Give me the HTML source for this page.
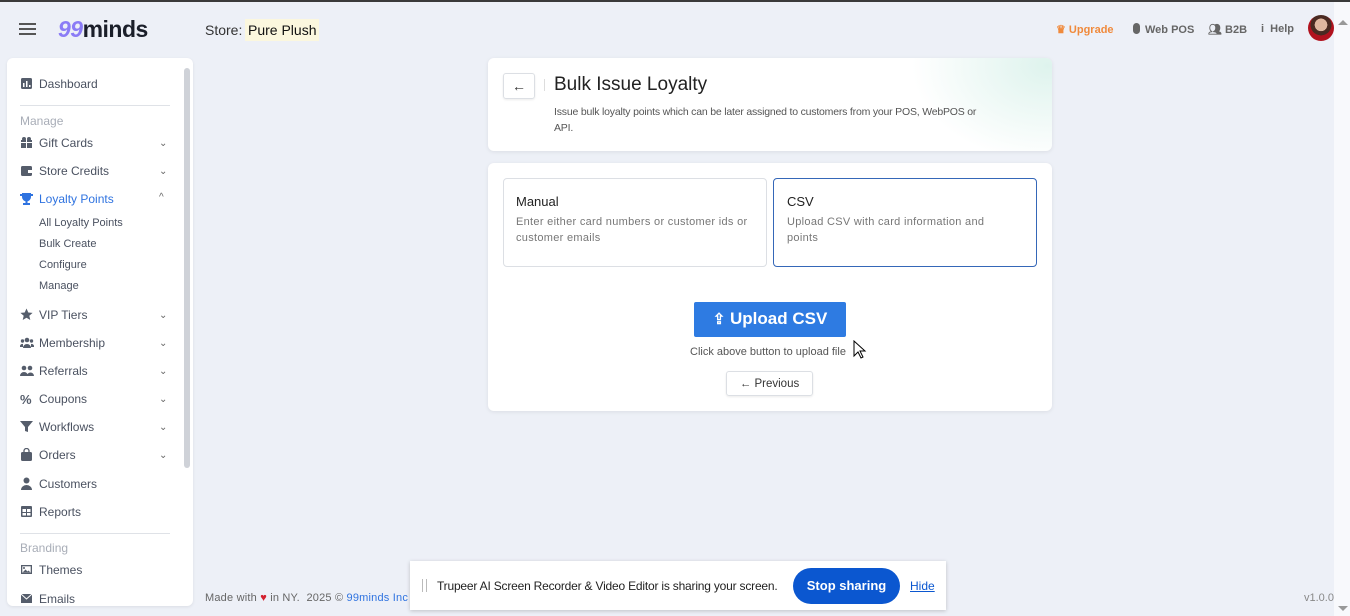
<!DOCTYPE html>
<html><head><meta charset="utf-8"><style>
*{box-sizing:border-box;margin:0;padding:0}
body{width:1350px;height:616px;overflow:hidden;background:#edf0f7;font-family:"Liberation Sans",sans-serif;color:#3d4451;position:relative}
.a{position:absolute}
.topline{left:0;top:0;width:1350px;height:2px;background:#3a3a3a}
.vscroll{left:1334px;top:2px;width:16px;height:614px;background:#f8f9fc}
.side{left:7px;top:58px;width:186px;height:548px;background:#fff;border-radius:6px;box-shadow:0 1px 3px rgba(0,0,0,.08);overflow:hidden}
.item{position:absolute;left:13px;font-size:12px;color:#4a5160}
.item svg{position:absolute;left:0;top:0}
.item span{position:absolute;left:19px;top:0;white-space:nowrap}
.chev{position:absolute;left:152px;font-size:10px;color:#666}
.sub{position:absolute;left:32px;font-size:11px;color:#4a5160}
.sec{position:absolute;left:13px;font-size:12px;color:#a8adb7}
.hr{position:absolute;left:13px;width:150px;height:1px;background:#dfe2e7}
.card{background:#fff;border-radius:6px;box-shadow:0 1px 4px rgba(0,0,0,.08)}
</style></head><body>
<div class="a topline"></div>
<div class="a vscroll"><div class="a" style="left:4px;top:18px;width:0;height:0;border-left:5px solid transparent;border-right:5px solid transparent;border-bottom:5px solid #999"></div><div class="a" style="left:4px;top:604px;width:0;height:0;border-left:5px solid transparent;border-right:5px solid transparent;border-top:5px solid #999"></div></div>

<!-- header -->
<div class="a" style="left:19px;top:23px;width:17px;height:1.5px;background:#555;box-shadow:0 5px 0 #555,0 10px 0 #555"></div>
<div class="a" style="left:58px;top:16px;font-size:23px;font-weight:bold;letter-spacing:-0.5px"><span style="color:#8b7cf6;font-style:italic">99</span><span style="color:#1b1f2a">minds</span></div>
<div class="a" style="left:205px;top:22px;font-size:14px;color:#333">Store:</div>
<div class="a" style="left:245px;top:19px;background:#fbf7de;padding:3px 3px;font-size:14px;color:#111">Pure Plush</div>

<div class="a" style="left:1056px;top:23px;font-size:11px;font-weight:bold;color:#f08a3c">♛ Upgrade</div>
<div class="a" style="left:1133px;top:23px;font-size:11px;font-weight:bold;color:#666"><span style="display:inline-block;width:7px;height:11px;background:#666;border-radius:4px;vertical-align:-1px;margin-right:5px"></span>Web POS</div>
<div class="a" style="left:1208px;top:23px;font-size:11px;font-weight:bold;color:#666">👥︎ B2B</div>
<div class="a" style="left:1261px;top:23px;font-size:11px;font-weight:bold;color:#666"><b>i</b>&nbsp; Help</div>
<div class="a" style="left:1308px;top:15px;width:26px;height:26px;border-radius:50%;background:radial-gradient(circle at 50% 38%,#e0b7a0 0 30%,#4a2a22 31% 50%,#b1121e 51%)"></div>

<!-- sidebar -->
<div class="a side">
 <div class="a" style="left:177px;top:10px;width:6px;height:400px;background:#cfd2d8;border-radius:3px"></div>
 <div class="item" style="top:19px"><svg width="13" height="13"><rect x="1" y="1" width="11" height="11" rx="1.5" fill="#555d6b"/><rect x="3" y="6" width="1.5" height="4" fill="#fff"/><rect x="6" y="4" width="1.5" height="6" fill="#fff"/><rect x="9" y="8" width="1.5" height="2" fill="#fff"/></svg><span>Dashboard</span></div>
 <div class="hr" style="top:47px"></div>
 <div class="sec" style="top:56px">Manage</div>
 <div class="item" style="top:78px"><svg width="13" height="13"><rect x="1" y="4" width="11" height="8" fill="#555d6b"/><rect x="6" y="4" width="1" height="8" fill="#fff"/><rect x="1" y="6" width="11" height="1" fill="#fff"/><circle cx="4" cy="3" r="2" fill="#555d6b"/><circle cx="9" cy="3" r="2" fill="#555d6b"/></svg><span>Gift Cards</span></div><div class="chev" style="top:80px">⌄</div>
 <div class="item" style="top:106px"><svg width="13" height="13"><rect x="1" y="2" width="11" height="10" rx="1.5" fill="#555d6b"/><rect x="8" y="6" width="4" height="3" fill="#fff"/></svg><span>Store Credits</span></div><div class="chev" style="top:108px">⌄</div>
 <div class="item" style="top:134px;color:#2f73e0"><svg width="13" height="13"><path d="M2 1h9v4a4.5 4.5 0 0 1-9 0z M0 2h3v2H0z M10 2h3v2h-3z" fill="#2f73e0"/><rect x="5.5" y="8" width="2" height="3" fill="#2f73e0"/><rect x="3" y="11" width="7" height="2" fill="#2f73e0"/></svg><span>Loyalty Points</span></div><div class="chev" style="top:134px">^</div>
 <div class="sub" style="top:159px">All Loyalty Points</div>
 <div class="sub" style="top:180px">Bulk Create</div>
 <div class="sub" style="top:201px">Configure</div>
 <div class="sub" style="top:222px">Manage</div>
 <div class="item" style="top:250px"><svg width="13" height="13"><path d="M6.5 0.5l1.8 4 4.3.4-3.3 2.9 1 4.2-3.8-2.3-3.8 2.3 1-4.2L.4 4.9l4.3-.4z" fill="#555d6b"/></svg><span>VIP Tiers</span></div><div class="chev" style="top:252px">⌄</div>
 <div class="item" style="top:278px"><svg width="14" height="13"><circle cx="7" cy="4" r="2.3" fill="#555d6b"/><circle cx="2.5" cy="5" r="1.7" fill="#555d6b"/><circle cx="11.5" cy="5" r="1.7" fill="#555d6b"/><path d="M3 12a4 4 0 0 1 8 0z M0 11a2.5 2.5 0 0 1 3-3v3z M14 11a2.5 2.5 0 0 0-3-3v3z" fill="#555d6b"/></svg><span>Membership</span></div><div class="chev" style="top:280px">⌄</div>
 <div class="item" style="top:306px"><svg width="14" height="13"><circle cx="4" cy="4" r="2.3" fill="#555d6b"/><circle cx="10" cy="4" r="2.3" fill="#555d6b"/><path d="M0 12a4 4 0 0 1 8 0z M7 12a3.5 3.5 0 0 1 7 0z" fill="#555d6b"/></svg><span>Referrals</span></div><div class="chev" style="top:308px">⌄</div>
 <div class="item" style="top:334px"><span style="left:0;font-weight:bold;font-size:13px;color:#555d6b">%</span><span>Coupons</span></div><div class="chev" style="top:336px">⌄</div>
 <div class="item" style="top:362px"><svg width="13" height="13"><path d="M0 1h13L8 7v5L5 11V7z" fill="#555d6b"/></svg><span>Workflows</span></div><div class="chev" style="top:364px">⌄</div>
 <div class="item" style="top:390px"><svg width="13" height="13"><rect x="1" y="4" width="11" height="9" rx="1.5" fill="#555d6b"/><path d="M4 5V3a2.5 2.5 0 0 1 5 0v2" stroke="#555d6b" stroke-width="1.3" fill="none"/></svg><span>Orders</span></div><div class="chev" style="top:392px">⌄</div>
 <div class="item" style="top:419px"><svg width="13" height="13"><circle cx="6.5" cy="3.5" r="3" fill="#555d6b"/><path d="M1 13a5.5 5 0 0 1 11 0z" fill="#555d6b"/></svg><span>Customers</span></div>
 <div class="item" style="top:447px"><svg width="13" height="13"><rect x="1" y="1" width="11" height="11" rx="1" fill="#555d6b"/><rect x="2.5" y="4" width="3.5" height="3" fill="#fff"/><rect x="7" y="4" width="3.5" height="3" fill="#fff"/><rect x="2.5" y="8" width="3.5" height="2.5" fill="#fff"/><rect x="7" y="8" width="3.5" height="2.5" fill="#fff"/></svg><span>Reports</span></div>
 <div class="hr" style="top:475px"></div>
 <div class="sec" style="top:483px">Branding</div>
 <div class="item" style="top:505px"><svg width="13" height="13"><rect x="1" y="2" width="11" height="9" fill="#555d6b"/><rect x="2.3" y="3.3" width="8.4" height="6.4" fill="#fff"/><path d="M2.5 9.5l3-3 2 2 1-1 2 2z" fill="#555d6b"/><circle cx="4" cy="5" r="1" fill="#555d6b"/></svg><span>Themes</span></div>
 <div class="item" style="top:534px"><svg width="13" height="13"><rect x="1" y="2" width="11" height="9" fill="#555d6b"/><path d="M1 2l5.5 5L12 2" stroke="#fff" stroke-width="1" fill="none"/></svg><span>Emails</span></div>
</div>

<!-- header card -->
<div class="a card" style="left:488px;top:58px;width:564px;height:93px;overflow:hidden">
 <div class="a" style="left:400px;top:-20px;width:200px;height:140px;background:radial-gradient(ellipse at 80% 20%,rgba(200,235,225,.6),rgba(255,255,255,0) 60%)"></div>
 <div class="a" style="left:15px;top:15px;width:32px;height:26px;border:1px solid #dcdfe4;border-radius:3px;box-shadow:0 1px 2px rgba(0,0,0,.08);text-align:center;font-size:14px;line-height:24px;color:#333">←</div>
 <div class="a" style="left:56px;top:21px;width:1px;height:12px;background:#ddd"></div>
 <div class="a" style="left:66px;top:16px;font-size:19px;color:#222">Bulk Issue Loyalty</div>
 <div class="a" style="left:66px;top:46px;width:440px;font-size:10.5px;line-height:16px;color:#555;letter-spacing:-0.2px">Issue bulk loyalty points which can be later assigned to customers from your POS, WebPOS or API.</div>
</div>

<!-- main card -->
<div class="a card" style="left:488px;top:163px;width:564px;height:248px">
 <div class="a" style="left:15px;top:15px;width:264px;height:89px;border:1px solid #dcdfe4;border-radius:4px"></div>
 <div class="a" style="left:28px;top:31px;font-size:13px;color:#222">Manual</div>
 <div class="a" style="left:28px;top:51px;width:245px;font-size:11px;line-height:16px;color:#777;letter-spacing:0.3px">Enter either card numbers or customer ids or customer emails</div>
 <div class="a" style="left:285px;top:15px;width:264px;height:89px;border:1px solid #3567b8;border-radius:4px"></div>
 <div class="a" style="left:299px;top:31px;font-size:13px;color:#222">CSV</div>
 <div class="a" style="left:299px;top:51px;width:225px;font-size:11px;line-height:16px;color:#777;letter-spacing:0.3px">Upload CSV with card information and points</div>
 <div class="a" style="left:206px;top:139px;width:152px;height:35px;background:#2e7be2;border-radius:2px;color:#fff;font-size:17px;font-weight:bold;line-height:34px;text-align:center"><span style="font-size:15px">⇪</span> Upload CSV</div>
 <div class="a" style="left:202px;top:183px;font-size:11px;color:#555">Click above button to upload file</div>
 <div class="a" style="left:238px;top:208px;width:87px;height:25px;border:1px solid #dcdfe4;border-radius:3px;box-shadow:0 1px 2px rgba(0,0,0,.08);font-size:11.5px;line-height:24px;text-align:center;color:#333">← Previous</div>
</div>
<svg class="a" style="left:853px;top:340px" width="14" height="20"><path d="M1 1v15l4-4 3 6 2-1-3-6h5z" fill="#fff" stroke="#000" stroke-width="1"/></svg>

<!-- footer -->
<div class="a" style="left:205px;top:592px;font-size:11px;color:#666;letter-spacing:0.2px">Made with <span style="color:#d3202f">♥</span> in NY. &nbsp;2025 © <span style="color:#2f73e0">99minds Inc</span></div>
<div class="a" style="left:1304px;top:592px;font-size:11px;color:#888">v1.0.0</div>

<div class="a" style="left:410px;top:561px;width:536px;height:49px;background:#fff;box-shadow:0 1px 4px rgba(0,0,0,.2)">
 <div class="a" style="left:12px;top:18px;width:5px;height:13px;border-left:1px solid #bbb;border-right:1px solid #bbb"></div>
 <div class="a" style="left:27px;top:18px;font-size:12px;color:#222;letter-spacing:-0.2px">Trupeer AI Screen Recorder &amp; Video Editor is sharing your screen.</div>
 <div class="a" style="left:383px;top:7px;width:107px;height:36px;background:#0b57d0;border-radius:18px;color:#fff;font-size:13px;font-weight:bold;line-height:36px;text-align:center">Stop sharing</div>
 <div class="a" style="left:500px;top:18px;font-size:12px;color:#0b57d0;text-decoration:underline">Hide</div>
</div>
</body></html>
